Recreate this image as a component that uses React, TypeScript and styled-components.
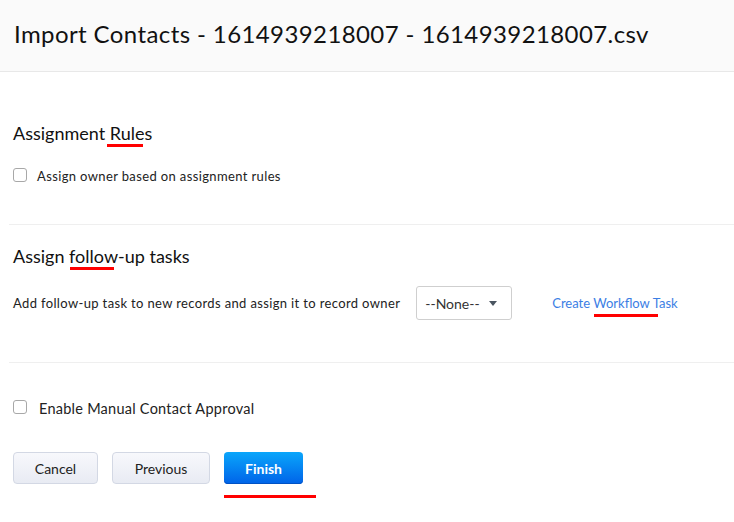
import React from 'react';
import styled, {createGlobalStyle} from "styled-components";

const GlobalStyle = createGlobalStyle`
    html, body {
        margin: 0;
        padding: 0;
        background: #ffffff;
        font-family: Lato, "Open Sans", sans-serif;
        color: #1f1f1f;
    }
`

export default function App() {
    return (
        <>
            <GlobalStyle/>
            <Page>
                <Header>
                    <Title>Import Contacts - 1614939218007 - 1614939218007.csv</Title>
                </Header>
                <Content>
                    <Section $top={49}>
                        <SectionTitle>Assignment <Marked $left={-3} $width={36}>Rules</Marked></SectionTitle>
                        <CheckRow $top={21}>
                            <Box/>
                            <CheckLabel>Assign owner based on assignment rules</CheckLabel>
                        </CheckRow>
                    </Section>
                    <Divider $top={38}/>
                    <Section $top={19}>
                        <SectionTitle>Assign <Marked $left={1} $width={44}>follow</Marked>-up tasks</SectionTitle>
                        <TaskRow>
                            <RowText>Add follow-up task to new records and assign it to record owner</RowText>
                            <Select>
                                <span>--None--</span>
                                <Caret/>
                            </Select>
                            <Link>Create <Marked $left={1} $width={64} $offset={6}>Workflow</Marked> Task</Link>
                        </TaskRow>
                    </Section>
                    <Divider $top={42}/>
                    <Section $top={35}>
                        <CheckRow $top={0}>
                            <Box/>
                            <CheckLabel $big>Enable Manual Contact Approval</CheckLabel>
                        </CheckRow>
                        <Buttons>
                            <Button>Cancel</Button>
                            <Button $wide>Previous</Button>
                            <PrimaryWrap>
                                <PrimaryButton>Finish</PrimaryButton>
                            </PrimaryWrap>
                        </Buttons>
                    </Section>
                </Content>
            </Page>
        </>
    );
}

const Page = styled.div`
    width: 734px;
    height: 522px;
    overflow: hidden;
`

const Header = styled.div`
    height: 71px;
    box-sizing: border-box;
    background: #fafafa;
    border-bottom: 1px solid #e8e8e8;
    display: flex;
    align-items: center;
    padding: 0 0 4px 14px;
    height: 72px;
`

const Title = styled.h1`
    margin: 0;
    font-size: 24px;
    font-weight: 400;
    color: #111;
    letter-spacing: 0.4px;
`

const Content = styled.div`
    padding-left: 9px;
`

const Section = styled.div<{ $top: number }>`
    padding-left: 4px;
    padding-top: ${p => p.$top}px;
`

const SectionTitle = styled.h2`
    margin: 0;
    font-size: 18px;
    line-height: 24px;
    font-weight: 400;
    color: #111;
`

const Marked = styled.span<{ $left: number; $width: number; $offset?: number }>`
    position: relative;

    &::after {
        content: "";
        position: absolute;
        left: ${p => p.$left}px;
        width: ${p => p.$width}px;
        bottom: ${p => -(p.$offset ?? 3)}px;
        height: 3px;
        background: #ff0000;
    }
`

const CheckRow = styled.div<{ $top: number }>`
    display: flex;
    align-items: center;
    height: 20px;
    margin-top: ${p => p.$top}px;
`

const Box = styled.span`
    width: 12px;
    height: 12px;
    border: 1px solid #a8a8a8;
    border-radius: 3px;
    background: #fff;
    margin-top: -2px;
`

const CheckLabel = styled.span<{ $big?: boolean }>`
    margin-left: ${p => p.$big ? 12 : 10}px;
    font-size: ${p => p.$big ? 14.5 : 13}px;
    letter-spacing: ${p => p.$big ? 0.25 : 0.37}px;
    color: #222;
`

const Divider = styled.div<{ $top: number }>`
    height: 1px;
    background: #efefef;
    margin-top: ${p => p.$top}px;
`

const TaskRow = styled.div`
    display: flex;
    align-items: center;
    margin-top: 18px;
    height: 34px;
`

const RowText = styled.span`
    font-size: 13px;
    letter-spacing: 0.36px;
    color: #222;
`

const Select = styled.div`
    margin-left: 16px;
    width: 96px;
    height: 34px;
    box-sizing: border-box;
    border: 1px solid #cfcfcf;
    border-radius: 3px;
    display: flex;
    align-items: center;
    justify-content: space-between;
    padding: 0 14px 0 8px;
    font-size: 14px;
    color: #333;
`

const Caret = styled.span`
    width: 0;
    height: 0;
    border-left: 4px solid transparent;
    border-right: 4px solid transparent;
    border-top: 5px solid #4a5560;
`

const Link = styled.span`
    margin-left: 40px;
    font-size: 13px;
    color: #3b7ee4;
`

const Buttons = styled.div`
    display: flex;
    gap: 14px;
    margin-top: 34px;
    align-items: flex-start;
`

const Button = styled.button<{ $wide?: boolean }>`
    width: ${p => p.$wide ? 98 : 85}px;
    height: 32px;
    border: 1px solid #d3d8e4;
    border-radius: 4px;
    background: linear-gradient(#f7f8fc, #e8ebf3);
    font-family: Lato, sans-serif;
    font-size: 14px;
    color: #222;
    padding: 0;
`

const PrimaryWrap = styled.div`
    position: relative;

    &::after {
        content: "";
        position: absolute;
        left: 0;
        top: 43px;
        width: 92px;
        height: 3px;
        background: #ff0000;
    }
`

const PrimaryButton = styled.button`
    width: 79px;
    height: 32px;
    border: none;
    border-radius: 4px;
    background: linear-gradient(#0aa6fb, #0063e8);
    box-shadow: inset 0 -1px 0 #0052c4;
    font-family: Lato, sans-serif;
    font-size: 14px;
    font-weight: 700;
    color: #fff;
    padding: 0;
`
